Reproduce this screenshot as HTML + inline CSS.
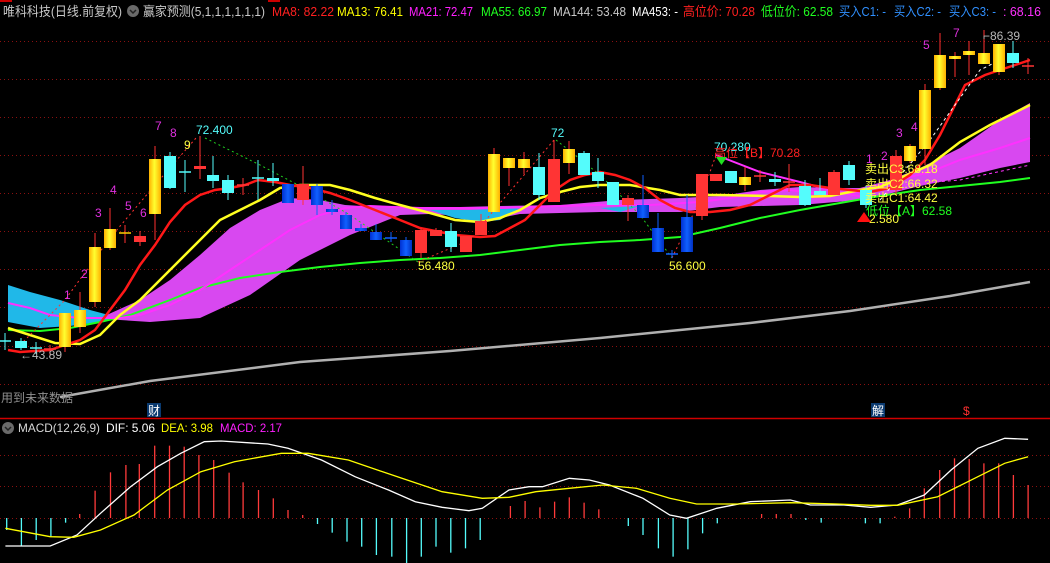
<!DOCTYPE html>
<html><head><meta charset="utf-8"><style>
html,body{margin:0;padding:0;background:#000;width:1050px;height:563px;overflow:hidden}
svg{display:block}
text{font-family:"Liberation Sans","Noto Sans CJK SC",sans-serif}
</style></head><body>
<svg id="s" width="1050" height="563" viewBox="0 0 1050 563" xmlns="http://www.w3.org/2000/svg">
<defs>
<linearGradient id="gy" x1="0" x2="1"><stop offset="0" stop-color="#ffb000"/><stop offset="0.45" stop-color="#ffff30"/><stop offset="1" stop-color="#ffb000"/></linearGradient>
<linearGradient id="gb" x1="0" x2="1"><stop offset="0" stop-color="#0030d0"/><stop offset="0.5" stop-color="#1060ff"/><stop offset="1" stop-color="#0030c0"/></linearGradient>
</defs>
<rect width="1050" height="563" fill="#000"/>
<line x1="0" y1="1" x2="12" y2="1" stroke="#c00" stroke-width="2"/>
<line x1="268" y1="1" x2="280" y2="1" stroke="#c00" stroke-width="2"/>
<g id="grid" stroke="#8a1010" stroke-width="1" stroke-dasharray="1,3"></g>
<g id="fills"></g>
<g id="lines" fill="none"></g>
<g id="candles"></g>
<g id="macd"></g>
<line x1="0" y1="418.5" x2="1050" y2="418.5" stroke="#d00000" stroke-width="1.5"/>
<g font-size="13" lengthAdjust="spacingAndGlyphs">
<text x="3" y="16" fill="#c8c8c8" textLength="119" lengthAdjust="spacingAndGlyphs">唯科科技(日线.前复权)</text>
<circle cx="133" cy="11" r="6" fill="#6a6a6a"/><path d="M130 10l3 3 3-3" stroke="#222" stroke-width="1.5" fill="none"/>
<text x="143" y="16" fill="#c8c8c8" textLength="122" lengthAdjust="spacingAndGlyphs">赢家预测(5,1,1,1,1,1,1)</text>
<text x="272" y="16" fill="#ff2020" textLength="62" lengthAdjust="spacingAndGlyphs">MA8: 82.22</text>
<text x="337" y="16" fill="#ffff00" textLength="66" lengthAdjust="spacingAndGlyphs">MA13: 76.41</text>
<text x="409" y="16" fill="#ff20ff" textLength="64" lengthAdjust="spacingAndGlyphs">MA21: 72.47</text>
<text x="481" y="16" fill="#20ff20" textLength="66" lengthAdjust="spacingAndGlyphs">MA55: 66.97</text>
<text x="553" y="16" fill="#c8c8c8" textLength="73" lengthAdjust="spacingAndGlyphs">MA144: 53.48</text>
<text x="632" y="16" fill="#ffffff" textLength="46" lengthAdjust="spacingAndGlyphs">MA453: -</text>
<text x="683" y="16" fill="#ff2020" textLength="72" lengthAdjust="spacingAndGlyphs">高位价: 70.28</text>
<text x="761" y="16" fill="#20ff20" textLength="72" lengthAdjust="spacingAndGlyphs">低位价: 62.58</text>
<text x="839" y="16" fill="#3090ff" textLength="47" lengthAdjust="spacingAndGlyphs">买入C1: -</text>
<text x="894" y="16" fill="#3090ff" textLength="47" lengthAdjust="spacingAndGlyphs">买入C2: -</text>
<text x="949" y="16" fill="#3090ff" textLength="47" lengthAdjust="spacingAndGlyphs">买入C3: -</text>
<text x="1003" y="16" fill="#ff30ff" textLength="38" lengthAdjust="spacingAndGlyphs">: 68.16</text>
</g>
<g font-size="12">
<text x="155" y="130" fill="#e030e0">7</text>
<text x="170" y="137" fill="#e030e0">8</text>
<text x="184" y="149" fill="#ffff40">9</text>
<text x="196" y="134" fill="#54fcfc">72.400</text>
<text x="110" y="194" fill="#e030e0">4</text>
<text x="95" y="217" fill="#e030e0">3</text>
<text x="125" y="210" fill="#e030e0">5</text>
<text x="140" y="217" fill="#e030e0">6</text>
<text x="81" y="278" fill="#e030e0">2</text>
<text x="64" y="299" fill="#e030e0">1</text>
<text x="20" y="359" fill="#b8b8b8">←43.89</text>
<text x="418" y="270" fill="#ffff40">56.480</text>
<text x="551" y="137" fill="#54fcfc">72</text>
<text x="669" y="270" fill="#ffff40">56.600</text>
<text x="714" y="151" fill="#54fcfc">70.280</text>
<text x="714" y="157" fill="#ff2020">高位【B】70.28</text>
<text x="866" y="163" fill="#e030e0">1</text>
<text x="881" y="160" fill="#e030e0">2</text>
<text x="896" y="137" fill="#e030e0">3</text>
<text x="911" y="131" fill="#e030e0">4</text>
<text x="923" y="49" fill="#e030e0">5</text>
<text x="953" y="37" fill="#e030e0">7</text>
<text x="983" y="40" fill="#b8b8b8">⌐86.39</text>
<text x="865" y="173" fill="#ffff40">卖出C3:68.18</text>
<text x="865" y="188" fill="#ffff40">卖出C2:66.32</text>
<text x="865" y="202" fill="#ffff40">卖出C1:64.42</text>
<text x="866" y="215" fill="#20ff20">低位【A】62.58</text>
<text x="869" y="223" fill="#ffff40">2.580</text>
<path d="M716 157h11l-5.5 8z" fill="#20e020"/>
<path d="M857 222h14l-7-10z" fill="#ff1010"/>
<text x="1" y="402" fill="#909090">用到未来数据</text>
<rect x="147" y="403" width="14" height="14" fill="#0a3a70"/><text x="148" y="415" fill="#fff">财</text>
<rect x="871" y="403" width="14" height="14" fill="#0a3a70"/><text x="872" y="415" fill="#fff">解</text>
<text x="963" y="415" fill="#ff3030">$</text>
<circle cx="8" cy="428" r="6" fill="#6a6a6a"/><path d="M5 427l3 3 3-3" stroke="#222" stroke-width="1.5" fill="none"/>
<text x="18" y="432" fill="#d8d8d8" textLength="82" lengthAdjust="spacingAndGlyphs">MACD(12,26,9)</text>
<text x="106" y="432" fill="#fff" textLength="49" lengthAdjust="spacingAndGlyphs">DIF: 5.06</text>
<text x="161" y="432" fill="#ffff00" textLength="52" lengthAdjust="spacingAndGlyphs">DEA: 3.98</text>
<text x="220" y="432" fill="#ff20ff" textLength="62" lengthAdjust="spacingAndGlyphs">MACD: 2.17</text>
</g>
</svg>
<script>
var NS="http://www.w3.org/2000/svg";
function el(p,t,a){var e=document.createElementNS(NS,t);for(var k in a)e.setAttribute(k,a[k]);document.getElementById(p).appendChild(e);return e;}
[41,79,117,155,193,231,269,307,346,384,455,486,518].forEach(function(y){el("grid","line",{x1:0,y1:y+.5,x2:1050,y2:y+.5});});
function pts(a){var s="";for(var i=0;i<a.length;i+=2)s+=a[i]+","+a[i+1]+" ";return s;}
el("fills","polygon",{points:pts([8,285,30,292,60,300,90,310,120,318,100,322,70,326,40,328,8,322]),fill:"#20b8e8"});
el("fills","polygon",{points:pts([100,318,140,300,170,280,200,255,230,228,260,210,290,198,320,200,345,205,380,207,420,208,500,206,560,205,620,200,680,198,720,196,760,190,800,187,840,188,860,188,890,180,920,168,960,148,1000,120,1030,103,1030,162,1000,168,960,178,920,186,880,196,860,200,800,205,720,207,680,212,600,212,520,214,500,218,430,214,400,215,350,235,300,260,250,295,200,318,150,322,120,320]),fill:"#d848f0"});
el("fills","polygon",{points:pts([430,210,470,210,520,208,500,220,480,222,455,218]),fill:"#20b8e8"});
el("fills","polygon",{points:pts([600,208,640,206,620,212]),fill:"#20b8e8"});
function pl(a,c,w,d){var o={points:pts(a),stroke:c,"stroke-width":w};if(d)o["stroke-dasharray"]=d;el("lines","polyline",o);}
pl([60,397,150,381,300,362,450,351,600,338,750,323,850,311,950,296,1030,282],"#b0b0b0",2.5);
pl([8,330,40,331,70,328,100,322,130,315,170,300,200,288,240,278,280,272,320,267,360,263,400,260,440,258,480,255,520,250,560,245,600,242,640,240,680,237,720,228,760,218,800,210,840,203,880,196,920,190,960,186,1000,182,1030,178],"#20ff20",2);
pl([8,303,30,308,50,315,80,318,120,318,140,315,170,305,200,290,230,270,260,250,290,230,320,215,345,208,370,206,420,208,500,208,560,206,600,205,650,205,700,202,730,198,760,192,790,190,830,195,860,192,890,182,930,172,960,160,1000,148,1030,138],"#ff30ff",2);
pl([716,155,760,172,800,182,830,190,863,197],"#ff30ff",2);
pl([8,328,30,335,55,343,80,344,100,335,120,315,140,300,160,280,180,260,200,240,220,220,240,210,260,200,280,188,300,185,330,185,350,190,375,198,400,205,430,213,455,220,480,222,500,218,520,210,540,198,560,192,580,187,600,185,630,185,660,190,680,195,720,195,770,196,800,197,830,196,860,190,880,187,900,178,930,165,960,142,990,125,1030,105],"#ffff20",2.5);
pl([8,350,20,352,50,350,65,345,80,340,95,330,110,310,125,290,140,265,155,245,170,222,185,205,200,195,215,190,230,188,245,185,258,180,275,182,290,185,310,188,330,193,350,200,375,210,400,220,420,228,440,232,455,235,480,237,495,236,510,228,525,220,540,205,555,190,570,180,585,175,600,172,615,175,630,180,645,188,660,200,675,208,690,212,710,212,730,210,750,205,770,195,790,185,810,185,830,188,850,190,870,192,890,188,910,175,925,160,940,135,950,115,965,85,985,75,1000,70,1030,60],"#ff1818",2.5);
pl([20,345,65,300,110,238,155,185,196,138],"#ff3030",1,"2,3");
pl([205,138,260,165,300,186,350,215,418,262],"#20d020",1,"2,3");
pl([418,262,470,240,494,210,554,140],"#ff3030",1,"2,3");
pl([556,140,600,175,640,215,672,258],"#20d020",1,"2,3");
pl([672,258,700,200,716,155],"#ff3030",1,"2,3");
pl([880,200,930,140,980,70,1000,60],"#ffffff",1,"3,3");
pl([900,185,960,180,1030,165],"#ff30ff",1,"3,3");
var C=[[5,341,341,333,350,'c'],[21,341,348,338,350,'c'],[36,348,348,342,354,'c'],[50,349,349,345,355,'r'],
[65,313,347,313,352,'y'],[80,310,327,292,333,'y'],[95,247,302,233,307,'y'],[110,229,248,208,250,'y'],[125,233,233,225,243,'y'],[140,236,242,231,246,'r'],
[155,159,214,146,240,'y'],[170,156,188,152,189,'c'],[185,172,172,160,192,'c'],[200,166,169,136,179,'r'],[213,175,181,156,188,'c'],[228,180,193,175,200,'c'],[243,185,185,178,195,'r'],[258,178,178,160,200,'c'],[273,178,181,163,186,'c'],
[288,184,203,184,203,'b'],[303,184,200,166,205,'r'],[317,186,205,184,215,'b'],[332,209,212,200,215,'b'],[346,215,229,212,229,'b'],[361,228,231,224,231,'b'],[376,232,240,224,240,'b'],[391,238,238,232,242,'b'],[406,240,256,237,256,'b'],
[421,230,253,228,258,'r'],[436,230,236,228,236,'r'],[451,231,247,223,252,'c'],[466,236,252,236,252,'r'],[481,221,235,214,235,'r'],[494,154,212,148,212,'y'],[509,158,168,158,186,'y'],[524,159,168,152,174,'y'],[539,167,195,153,200,'c'],[554,159,202,140,202,'r'],[569,149,163,141,174,'y'],[584,153,175,151,175,'c'],[598,172,181,158,188,'c'],[613,182,205,182,205,'c'],[628,198,205,195,221,'r'],
[643,205,218,175,218,'b'],[658,228,252,213,252,'b'],[672,254,254,250,258,'b'],[687,217,252,195,252,'b'],[702,174,216,174,220,'r'],[716,174,181,174,181,'r'],[731,171,183,171,183,'c'],[745,177,185,167,191,'y'],[760,176,176,170,182,'r'],[775,179,182,172,186,'c'],[789,182,182,164,192,'r'],[805,186,205,180,206,'c'],[820,191,195,178,195,'c'],[834,172,195,170,195,'r'],[849,165,180,161,185,'c'],[866,190,205,186,208,'c'],
[896,156,190,150,195,'r'],[910,146,161,144,163,'y'],[925,90,149,84,165,'y'],[940,55,88,33,90,'y'],[955,56,59,52,77,'y'],[969,51,55,41,75,'y'],[984,53,64,30,64,'y'],[999,44,72,44,75,'y'],[1013,53,63,41,68,'c'],[1028,66,66,58,74,'r']];
var col={y:"url(#gy)",c:"#54fcfc",r:"#ff3434",b:"url(#gb)"},wc={y:"#ff3030",c:"#54fcfc",r:"#ff3434",b:"#1060ff"};
C.forEach(function(k){var x=k[0];
 el("candles","line",{x1:x,y1:k[3],x2:x,y2:k[4],stroke:wc[k[5]],"stroke-width":1});
 if(k[2]-k[1]<1){el("candles","line",{x1:x-6,y1:k[1],x2:x+6,y2:k[1],stroke:k[5]=='y'?"#ffd000":wc[k[5]],"stroke-width":1.5});}
 else el("candles","rect",{x:x-6,y:k[1],width:12,height:k[2]-k[1],fill:col[k[5]]});
});
var X=[[10,330],[32,378],[54,360],[76,350],[98,308],[474,312],[496,338],[518,365],[540,380],[562,405],[585,410],[607,429],[629,410],[651,380],[673,398],[695,385],[717,360],[938,318],[960,345],[983,385],[1005,410],[1027,388],[1049,340],[1071,310],[1203,300],[1226,308],[1292,310],[1314,310]];
X.forEach(function(b){var x=(b[0]/1.493).toFixed(1);el("macd","line",{x1:x,y1:518,x2:x,y2:420+b[1]/3,stroke:"#54fcfc","stroke-width":1.3});});
var R=[[119,282],[142,212],[165,157],[188,135],[208,132],[231,77],[253,77],[275,80],[297,105],[319,120],[342,158],[363,187],[386,210],[408,235],[430,270],[452,285],[762,258],[784,243],[806,262],[828,245],[850,232],[872,248],[894,268],[1137,282],[1159,282],[1181,282],[1336,290],[1358,265],[1380,205],[1403,150],[1425,115],[1447,117],[1469,130],[1491,130],[1513,165],[1535,195]];
R.forEach(function(b){var x=(b[0]/1.493).toFixed(1);el("macd","line",{x1:x,y1:518,x2:x,y2:420+b[1]/3,stroke:"#ff3a3a","stroke-width":1.3});});
function mp(a,c){var s="";for(var i=0;i<a.length;i+=2)s+=(a[i]/1.493).toFixed(1)+","+(420+a[i+1]/3).toFixed(1)+" ";el("macd","polyline",{points:s,fill:"none",stroke:c,"stroke-width":1.3});}
mp([8,378,75,378,115,345,150,280,195,200,235,140,270,100,305,65,330,63,400,72,430,85,480,120,530,170,580,210,620,245,660,262,700,272,720,265,760,210,790,200,810,200,850,175,880,180,910,195,960,235,1000,285,1025,295,1070,265,1120,245,1180,240,1210,255,1260,255,1300,262,1340,255,1380,225,1420,150,1460,85,1500,55,1535,58],"#ffffff");
mp([8,325,75,350,110,352,150,330,200,285,250,210,300,155,350,125,420,100,460,100,520,120,600,175,660,215,720,235,760,232,800,215,850,205,900,195,950,205,1000,235,1040,252,1100,252,1180,248,1250,252,1300,256,1340,256,1400,230,1460,170,1500,130,1535,110],"#ffff00");
</script>
</body></html>
